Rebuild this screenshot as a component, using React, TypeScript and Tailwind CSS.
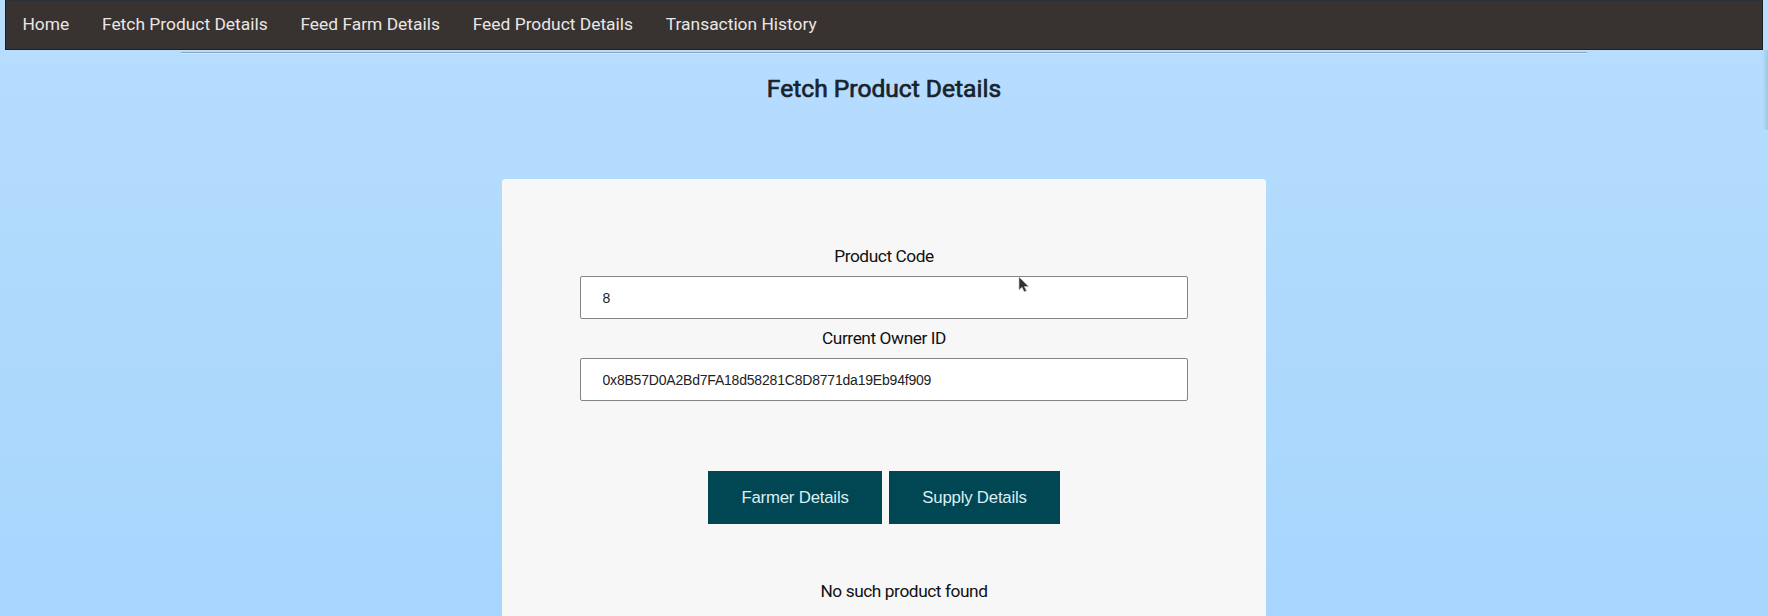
const links = [
  'Home',
  'Fetch Product Details',
  'Feed Farm Details',
  'Feed Product Details',
  'Transaction History',
];

function Field({ label, value }: { label: string; value: string }) {
  return (
    <div className="flex flex-col items-center">
      <label className="h-[30px] text-[17.3px] leading-[20px] tracking-[-0.42px] text-[#111]">{label}</label>
      <input
        className="h-[43px] w-[608px] rounded-[2px] border border-[#858585] bg-white pl-[21.5px] font-['Liberation_Sans',Arial,sans-serif] text-[14px] tracking-[-0.2px] text-[#222] outline-none"
        defaultValue={value}
      />
    </div>
  );
}

function Cursor() {
  return (
    <svg className="absolute left-[1018px] top-[276px]" width="12" height="18" viewBox="0 0 12 18">
      <path
        d="M1 1v13l3-2.8 2.2 4.6 2.3-1-2.2-4.3h4.3z"
        fill="#333"
        stroke="#c8c8c8"
        strokeWidth="0.6"
      />
    </svg>
  );
}

export default function App() {
  return (
    <div className="relative flex h-[616px] flex-col overflow-hidden bg-linear-to-b from-[#b8ddff] via-[#b0dafc] via-40% to-[#a7d5fd] font-[Roboto,sans-serif]">
      <nav className="mx-[5px] flex h-[50px] shrink-0 items-center border border-[#1b2023] border-t-[#2c3038] bg-[#383230] pb-[2px]">
        {links.map((link) => (
          <a key={link} href="#" className="px-[16.4px] text-[17.4px] leading-6 text-[#e9e7e5]">
            {link}
          </a>
        ))}
      </nav>
      <hr className="mx-auto mt-[2px] w-[1406px] border-0 border-t border-b border-t-[#8ba2b5] border-b-[#d5ebf8]" />
      <h1 className="mt-[19px] text-center text-[24.6px] leading-[32px] text-[#18232c] [-webkit-text-stroke:0.7px_#18232c]">
        Fetch Product Details
      </h1>
      <main className="mx-auto mt-[74px] flex w-[764px] flex-1 flex-col items-center rounded-t-[3px] bg-[#f7f7f8] pt-[67px]">
        <Field label="Product Code" value="8" />
        <div className="h-[9px]" />
        <Field label="Current Owner ID" value="0x8B57D0A2Bd7FA18d58281C8D8771da19Eb94f909" />
        <div className="mt-[70px] flex gap-[7px] font-['Liberation_Sans',Arial,sans-serif] text-[16.8px] tracking-[-0.2px] text-[#dceff3]">
          <button className="h-[53px] w-[174px] bg-[#004653]">Farmer Details</button>
          <button className="h-[53px] w-[171px] bg-[#004653]">Supply Details</button>
        </div>
        <p className="mt-[56px] pl-[40px] text-[17.3px] leading-[22px] tracking-[-0.42px] text-[#111]">No such product found</p>
      </main>
      <div className="absolute top-[50px] right-0 h-[80px] w-[5px] bg-linear-to-r from-[#b4daf8] to-[#9cc8e8]" />
      <Cursor />
    </div>
  );
}
